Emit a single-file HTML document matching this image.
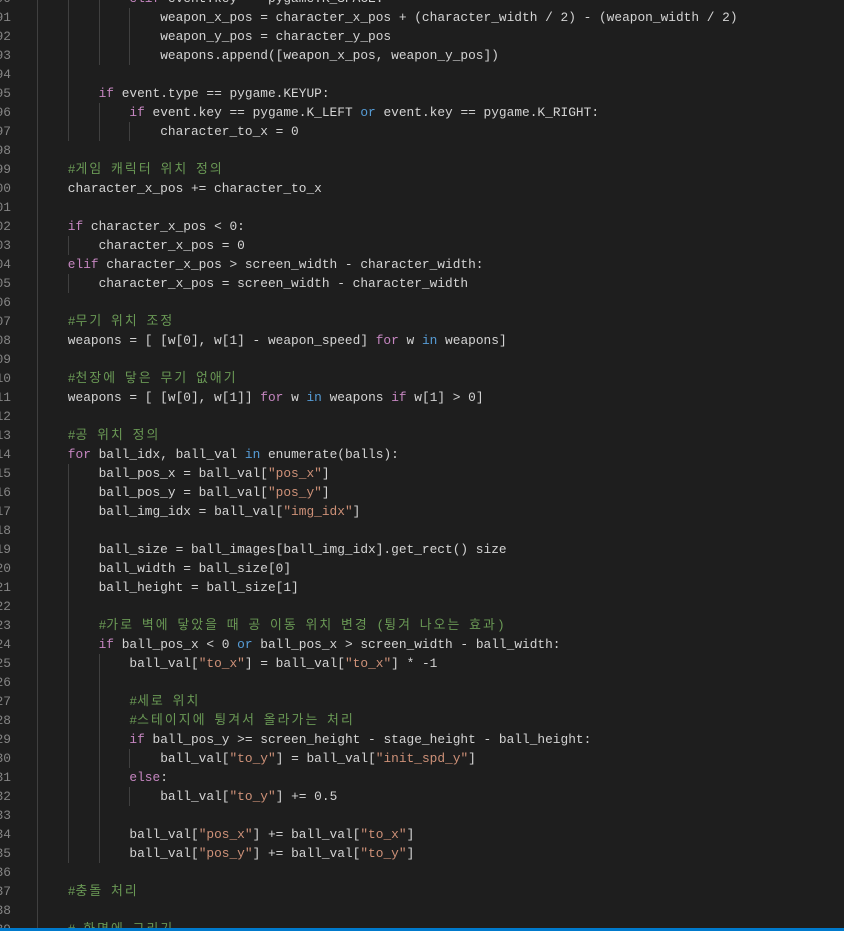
<!DOCTYPE html>
<html><head><meta charset="utf-8"><style>
html,body{margin:0;padding:0;background:#1e1e1e;width:844px;height:931px;overflow:hidden}
#ed{position:absolute;left:0;top:-11px;width:844px;height:942px;overflow:hidden}
.l{position:relative;height:19px;font-family:"Liberation Mono","Noto Sans CJK KR",monospace;font-size:12.83px;line-height:19px;color:#d4d4d4;white-space:pre}
.n{position:absolute;right:833px;color:#858585}
.c{position:absolute;left:37px;top:0}
.c i{display:inline-block;width:30.8px;height:19px;vertical-align:top;box-sizing:border-box;border-left:1px solid #404040}
.k{color:#c586c0}.b{color:#569cd6}.s{color:#ce9178}.m{color:#6a9955}
.h{letter-spacing:2.1px}
#sb{position:absolute;left:0;top:928px;width:844px;height:3px;background:#007acc}
</style></head><body><div id="ed">
<div class="l"><span class="n">90</span><span class="c"><i></i><i></i><i></i><span class="k">elif</span> event.key == pygame.K_SPACE:</span></div>
<div class="l"><span class="n">91</span><span class="c"><i></i><i></i><i></i><i></i>weapon_x_pos = character_x_pos + (character_width / 2) - (weapon_width / 2)</span></div>
<div class="l"><span class="n">92</span><span class="c"><i></i><i></i><i></i><i></i>weapon_y_pos = character_y_pos</span></div>
<div class="l"><span class="n">93</span><span class="c"><i></i><i></i><i></i><i></i>weapons.append([weapon_x_pos, weapon_y_pos])</span></div>
<div class="l"><span class="n">94</span><span class="c"><i></i><i></i></span></div>
<div class="l"><span class="n">95</span><span class="c"><i></i><i></i><span class="k">if</span> event.type == pygame.KEYUP:</span></div>
<div class="l"><span class="n">96</span><span class="c"><i></i><i></i><i></i><span class="k">if</span> event.key == pygame.K_LEFT <span class="b">or</span> event.key == pygame.K_RIGHT:</span></div>
<div class="l"><span class="n">97</span><span class="c"><i></i><i></i><i></i><i></i>character_to_x = 0</span></div>
<div class="l"><span class="n">98</span><span class="c"><i></i></span></div>
<div class="l"><span class="n">99</span><span class="c"><i></i><span class="m">#<span class="h">게임</span> <span class="h">캐릭터</span> <span class="h">위치</span> <span class="h">정의</span></span></span></div>
<div class="l"><span class="n">100</span><span class="c"><i></i>character_x_pos += character_to_x</span></div>
<div class="l"><span class="n">101</span><span class="c"><i></i></span></div>
<div class="l"><span class="n">102</span><span class="c"><i></i><span class="k">if</span> character_x_pos &lt; 0:</span></div>
<div class="l"><span class="n">103</span><span class="c"><i></i><i></i>character_x_pos = 0</span></div>
<div class="l"><span class="n">104</span><span class="c"><i></i><span class="k">elif</span> character_x_pos &gt; screen_width - character_width:</span></div>
<div class="l"><span class="n">105</span><span class="c"><i></i><i></i>character_x_pos = screen_width - character_width</span></div>
<div class="l"><span class="n">106</span><span class="c"><i></i></span></div>
<div class="l"><span class="n">107</span><span class="c"><i></i><span class="m">#<span class="h">무기</span> <span class="h">위치</span> <span class="h">조정</span></span></span></div>
<div class="l"><span class="n">108</span><span class="c"><i></i>weapons = [ [w[0], w[1] - weapon_speed] <span class="k">for</span> w <span class="b">in</span> weapons]</span></div>
<div class="l"><span class="n">109</span><span class="c"><i></i></span></div>
<div class="l"><span class="n">110</span><span class="c"><i></i><span class="m">#<span class="h">천장에</span> <span class="h">닿은</span> <span class="h">무기</span> <span class="h">없애기</span></span></span></div>
<div class="l"><span class="n">111</span><span class="c"><i></i>weapons = [ [w[0], w[1]] <span class="k">for</span> w <span class="b">in</span> weapons <span class="k">if</span> w[1] &gt; 0]</span></div>
<div class="l"><span class="n">112</span><span class="c"><i></i></span></div>
<div class="l"><span class="n">113</span><span class="c"><i></i><span class="m">#<span class="h">공</span> <span class="h">위치</span> <span class="h">정의</span></span></span></div>
<div class="l"><span class="n">114</span><span class="c"><i></i><span class="k">for</span> ball_idx, ball_val <span class="b">in</span> enumerate(balls):</span></div>
<div class="l"><span class="n">115</span><span class="c"><i></i><i></i>ball_pos_x = ball_val[<span class="s">"pos_x"</span>]</span></div>
<div class="l"><span class="n">116</span><span class="c"><i></i><i></i>ball_pos_y = ball_val[<span class="s">"pos_y"</span>]</span></div>
<div class="l"><span class="n">117</span><span class="c"><i></i><i></i>ball_img_idx = ball_val[<span class="s">"img_idx"</span>]</span></div>
<div class="l"><span class="n">118</span><span class="c"><i></i><i></i></span></div>
<div class="l"><span class="n">119</span><span class="c"><i></i><i></i>ball_size = ball_images[ball_img_idx].get_rect() size</span></div>
<div class="l"><span class="n">120</span><span class="c"><i></i><i></i>ball_width = ball_size[0]</span></div>
<div class="l"><span class="n">121</span><span class="c"><i></i><i></i>ball_height = ball_size[1]</span></div>
<div class="l"><span class="n">122</span><span class="c"><i></i><i></i></span></div>
<div class="l"><span class="n">123</span><span class="c"><i></i><i></i><span class="m">#<span class="h">가로</span> <span class="h">벽에</span> <span class="h">닿았을</span> <span class="h">때</span> <span class="h">공</span> <span class="h">이동</span> <span class="h">위치</span> <span class="h">변경</span> (<span class="h">튕겨</span> <span class="h">나오는</span> <span class="h">효과</span>)</span></span></div>
<div class="l"><span class="n">124</span><span class="c"><i></i><i></i><span class="k">if</span> ball_pos_x &lt; 0 <span class="b">or</span> ball_pos_x &gt; screen_width - ball_width:</span></div>
<div class="l"><span class="n">125</span><span class="c"><i></i><i></i><i></i>ball_val[<span class="s">"to_x"</span>] = ball_val[<span class="s">"to_x"</span>] * -1</span></div>
<div class="l"><span class="n">126</span><span class="c"><i></i><i></i><i></i></span></div>
<div class="l"><span class="n">127</span><span class="c"><i></i><i></i><i></i><span class="m">#<span class="h">세로</span> <span class="h">위치</span></span></span></div>
<div class="l"><span class="n">128</span><span class="c"><i></i><i></i><i></i><span class="m">#<span class="h">스테이지에</span> <span class="h">튕겨서</span> <span class="h">올라가는</span> <span class="h">처리</span></span></span></div>
<div class="l"><span class="n">129</span><span class="c"><i></i><i></i><i></i><span class="k">if</span> ball_pos_y &gt;= screen_height - stage_height - ball_height:</span></div>
<div class="l"><span class="n">130</span><span class="c"><i></i><i></i><i></i><i></i>ball_val[<span class="s">"to_y"</span>] = ball_val[<span class="s">"init_spd_y"</span>]</span></div>
<div class="l"><span class="n">131</span><span class="c"><i></i><i></i><i></i><span class="k">else</span>:</span></div>
<div class="l"><span class="n">132</span><span class="c"><i></i><i></i><i></i><i></i>ball_val[<span class="s">"to_y"</span>] += 0.5</span></div>
<div class="l"><span class="n">133</span><span class="c"><i></i><i></i><i></i></span></div>
<div class="l"><span class="n">134</span><span class="c"><i></i><i></i><i></i>ball_val[<span class="s">"pos_x"</span>] += ball_val[<span class="s">"to_x"</span>]</span></div>
<div class="l"><span class="n">135</span><span class="c"><i></i><i></i><i></i>ball_val[<span class="s">"pos_y"</span>] += ball_val[<span class="s">"to_y"</span>]</span></div>
<div class="l"><span class="n">136</span><span class="c"><i></i></span></div>
<div class="l"><span class="n">137</span><span class="c"><i></i><span class="m">#<span class="h">충돌</span> <span class="h">처리</span></span></span></div>
<div class="l"><span class="n">138</span><span class="c"><i></i></span></div>
<div class="l"><span class="n">139</span><span class="c"><i></i><span class="m"># <span class="h">화면에</span> <span class="h">그리기</span></span></span></div>
</div><div id="sb"></div></body></html>
